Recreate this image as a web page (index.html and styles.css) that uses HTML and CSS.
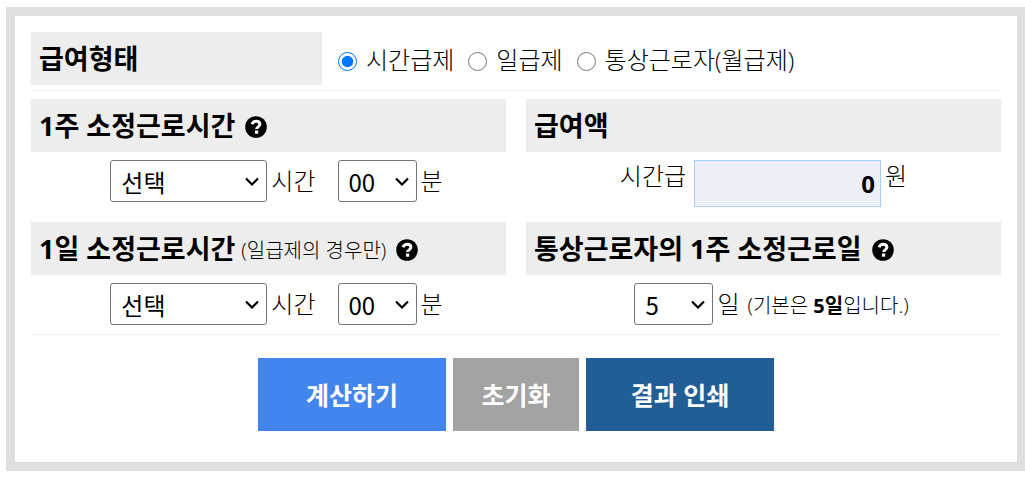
FILE: index.html
```html
<!DOCTYPE html>
<html lang="ko">
<head>
<meta charset="utf-8">
<meta name="viewport" content="width=device-width, initial-scale=1">
<title>급여 계산기</title>
<link rel="stylesheet" href="styles.css">
</head>
<body>
<svg class="sprite" aria-hidden="true">
  <symbol id="help" viewBox="0 0 22 22">
    <circle cx="11" cy="11" r="10.8"/>
    <path d="M7 8.300C7.800 6.300 9.200 5.300 11.200 5.300c2.300 0 3.700 1.300 3.700 3 0 2.600-3.300 2.500-3.300 4.800" fill="none" stroke="#fff" stroke-width="3"/>
    <rect x="10" y="14.500" width="3.200" height="3.200" fill="#fff"/>
  </symbol>
</svg>
<form class="panel">
  <div class="pay-type" role="radiogroup" aria-labelledby="pay-type-title">
    <h2 class="heading" id="pay-type-title">급여형태</h2>
    <div class="options">
      <label class="option"><input class="radio" type="radio" name="type" checked>시간급제</label>
      <label class="option"><input class="radio" type="radio" name="type">일급제</label>
      <label class="option"><input class="radio" type="radio" name="type">통상근로자(월급제)</label>
    </div>
  </div>
  <div class="fields">
    <section class="field">
      <h2 class="heading">1주 소정근로시간<svg class="help"><use href="#help"/></svg></h2>
      <div class="controls">
        <select class="select wide" id="week-hours"><option>선택</option></select>
        <label class="hours" for="week-hours">시간</label>
        <select class="select" id="week-minutes"><option>00</option></select>
        <label for="week-minutes">분</label>
      </div>
    </section>
    <section class="field">
      <h2 class="heading">급여액</h2>
      <div class="controls amount-row">
        <label class="amount-label" for="amount">시간급</label>
        <input class="amount" id="amount" type="text" value="0">
        <span>원</span>
      </div>
    </section>
    <section class="field">
      <h2 class="heading">1일 소정근로시간<small class="note">(일급제의 경우만)</small><svg class="help"><use href="#help"/></svg></h2>
      <div class="controls">
        <select class="select wide" id="day-hours"><option>선택</option></select>
        <label class="hours" for="day-hours">시간</label>
        <select class="select" id="day-minutes"><option>00</option></select>
        <label for="day-minutes">분</label>
      </div>
    </section>
    <section class="field">
      <h2 class="heading">통상근로자의 1주 소정근로일<svg class="help"><use href="#help"/></svg></h2>
      <div class="controls">
        <select class="select" id="days"><option>5</option></select>
        <label for="days">일</label>
        <small class="note">(기본은 <b>5일</b>입니다.)</small>
      </div>
    </section>
  </div>
  <div class="actions">
    <button class="button primary" type="button">계산하기</button>
    <button class="button reset" type="reset">초기화</button>
    <button class="button print" type="button">결과 인쇄</button>
  </div>
</form>
</body>
</html>
```
FILE: styles.css
```css
* { box-sizing: border-box; }
body {
  margin: 7px 0 7px 6px;
  background: #fff;
  color: #000;
  font-family: "Open Sans", "Noto Sans CJK KR", sans-serif;
  font-size: 24px;
  font-weight: 300;
  line-height: 32px;
}
.sprite { display: none; }
.panel {
  border: 9px solid #dfdfdf;
  border-right-width: 8px;
  padding: 16px 16px 31px;
}
.pay-type {
  display: flex;
  border-bottom: 1px solid #eee;
  padding-bottom: 5px;
}
.pay-type .heading { flex: 0 0 30%; }
.heading {
  display: flex;
  align-items: center;
  margin: 0;
  height: 53px;
  padding: 0 8px;
  background: #ededed;
  font-size: 27px;
  font-weight: 700;
  white-space: nowrap;
}
.help { width: 22px; height: 22px; margin: 2px 0 0 10px; }
.options {
  display: flex;
  align-items: center;
  gap: 14px;
  padding: 3px 0 0 16px;
  white-space: nowrap;
}
.option { display: flex; align-items: center; }
.radio { width: 19px; height: 19px; margin: 3px 9px 0 0; }
.fields {
  display: grid;
  grid-template-columns: 1fr 1fr;
  gap: 15px 20px;
  padding: 8px 0 9px;
  border-bottom: 1px solid #eee;
}
.controls {
  display: flex;
  justify-content: center;
  align-items: center;
  gap: 4px;
  padding: 8px 0 0 16px;
  white-space: nowrap;
}
.select {
  appearance: none;
  width: 79px;
  height: 42px;
  border: 1px solid #767676;
  border-radius: 3px;
  padding: 0 10px;
  background: #fff url("data:image/svg+xml,%3Csvg xmlns='http://www.w3.org/2000/svg' viewBox='0 0 14 9'%3E%3Cpath d='M1 1.500L7 7.500L13 1.500' fill='none' stroke='%23000' stroke-width='2.200'/%3E%3C/svg%3E") no-repeat right 7px center / 14px 9px;
  color: #000;
  font: 400 24px "Noto Sans CJK KR", sans-serif;
}
.wide { width: 157px; }
.hours { margin-right: 18px; }
.amount-row { align-items: flex-start; padding-left: 0; }
.amount-label { margin-right: 4px; }
.amount {
  width: 187px;
  height: 47px;
  border: 1px solid #a9cdf8;
  padding: 0 5px;
  background: #ecf0f6;
  color: #000;
  font: 700 24px "Open Sans", "Noto Sans CJK KR", sans-serif;
  text-align: right;
}
.note { margin: 4px 0 0 4px; font-size: 20px; font-weight: 300; }
.heading .note { margin-left: 6px; }
.note b { font-weight: 700; }
.actions {
  display: flex;
  justify-content: center;
  gap: 7px;
  padding-top: 23px;
}
.button {
  width: 188px;
  height: 73px;
  border: 0;
  padding: 0 0 2px;
  color: #fff;
  font: 600 25px "Open Sans", "Noto Sans CJK KR", sans-serif;
}
.primary { background: #4285ed; }
.reset { width: 126px; background: #a3a3a3; }
.print { background: #225e96; }
```
